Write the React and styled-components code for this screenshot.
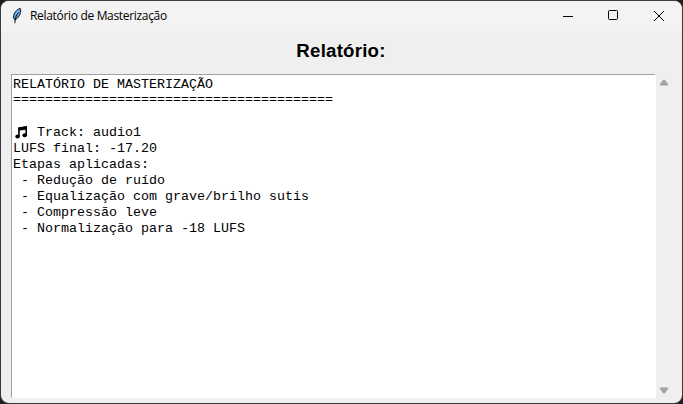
import React from "react";
import styled, { createGlobalStyle } from "styled-components";

const GlobalStyle = createGlobalStyle`
  * { box-sizing: border-box; }
  body { margin: 0; background: #1e1e20; overflow: hidden; }
`;

const Desktop = styled.div`
  width: 683px;
  height: 404px;
  background: #1e1e20;
`;

const Window = styled.main`
  display: flex;
  flex-direction: column;
  width: 683px;
  height: 404px;
  border: 1px solid #3b3a3d;
  border-radius: 9px;
  background: #efefef;
  overflow: hidden;
`;

const TitleBar = styled.header`
  display: flex;
  align-items: center;
  flex: none;
  height: 30px;
  padding-left: 9px;
  background: #f3f3f3;
`;

const AppIcon = styled.svg`
  flex: none;
  width: 14px;
  height: 18px;
  margin-right: 6px;
`;

const WindowTitle = styled.span`
  flex: 1;
  font: 12px/16px "Open Sans", "Noto Sans", sans-serif;
  letter-spacing: -0.32px;
  color: #000;
  white-space: nowrap;
`;

const ControlButton = styled.button`
  display: flex;
  align-items: center;
  justify-content: center;
  width: ${(p) => p.$width}px;
  height: 30px;
  padding: 0 0 1px;
  border: 0;
  background: transparent;

  svg { display: block; }
`;

const Heading = styled.h1`
  flex: none;
  height: 43px;
  margin: 0;
  padding-top: 9px;
  padding-right: 1px;
  font: bold 18.67px/22px "Liberation Sans", Arial, sans-serif;
  letter-spacing: 0.22px;
  color: #000;
  text-align: center;
`;

const Content = styled.section`
  display: flex;
  height: 324px;
  margin-left: 10px;
`;

const Report = styled.pre`
  width: 645px;
  height: 324px;
  margin: 0;
  padding: 2px 0 0 1px;
  border: 1px solid #fff;
  border-top-color: #a0a0a0;
  border-left-color: #a0a0a0;
  border-right-width: 2px;
  background: #fff;
  color: #000;
  font: 13.333px/16px "Liberation Mono", "Courier New", monospace;
`;

const Line = styled.div`
  display: flex;
  height: 16px;
  white-space: pre;
  line-height: ${(p) => (p.$rule ? 14 : 16)}px;
`;

const NoteIcon = styled.svg`
  width: 16px;
  height: 16px;
`;

const Scrollbar = styled.aside`
  display: flex;
  flex-direction: column;
  justify-content: space-between;
  align-items: center;
  width: 16px;
  padding: 5px 0 4px;
`;

const Arrow = styled.svg`
  display: block;
  width: 10px;
  height: 7px;
  fill: #a3a3a3;
`;

const lines = [
  "Etapas aplicadas:",
  " - Redução de ruído",
  " - Equalização com grave/brilho sutis",
  " - Compressão leve",
  " - Normalização para -18 LUFS",
];

export default function App() {
  return (
    <Desktop>
      <GlobalStyle />
      <Window>
        <TitleBar>
          <AppIcon viewBox="0 0 14 18">
            <path d="M10.2 1.4C6.4 2.3 3.6 6.2 3.4 10.2L4.6 12.9C8.4 11.8 11.3 6.5 10.6 1.8Z" fill="#5b9be0" stroke="#151c28" strokeWidth="1" />
            <path d="M8.2 5.2C6.3 8.2 5.1 11.2 4.9 16.2" fill="none" stroke="#10151d" strokeWidth="1" />
            <path d="M8.7 3.4L5.4 7.8" stroke="#a4cdf4" strokeWidth=".9" />
          </AppIcon>
          <WindowTitle>Relatório de Masterização</WindowTitle>
          <ControlButton $width={46} aria-label="Minimizar">
            <svg width="12" height="12" viewBox="0 0 12 12" shapeRendering="crispEdges"><path d="M1 6H11" stroke="#000" /></svg>
          </ControlButton>
          <ControlButton $width={45} aria-label="Maximizar">
            <svg width="11" height="11" viewBox="0 0 11 11"><rect x=".5" y=".5" width="9" height="9" rx="1" fill="none" stroke="#000" /></svg>
          </ControlButton>
          <ControlButton $width={46} aria-label="Fechar">
            <svg width="12" height="12" viewBox="0 0 12 12"><path d="M1 1L11 11M11 1L1 11" stroke="#000" strokeWidth="1" /></svg>
          </ControlButton>
        </TitleBar>
        <Heading>Relatório:</Heading>
        <Content>
          <Report>
            <Line>RELATÓRIO DE MASTERIZAÇÃO</Line>
            <Line $rule>{"=".repeat(40)}</Line>
            <Line />
            <Line>
              <NoteIcon viewBox="0 0 16 16" aria-label="♫">
                <path d="M6 11.5V3.2L13.2 2V10" fill="none" stroke="#000" strokeWidth="1.6" />
                <path d="M5.2 2.6L14 1.2V4.4L5.2 5.8Z" />
                <ellipse cx="4.6" cy="11.6" rx="2.3" ry="2" />
                <ellipse cx="11.7" cy="10.3" rx="2.3" ry="2" />
              </NoteIcon>
              {" Track: audio1"}
            </Line>
            <Line>LUFS final: -17.20</Line>
            {lines.map((line) => <Line key={line}>{line}</Line>)}
          </Report>
          <Scrollbar>
            <Arrow viewBox="0 0 10 7"><path d="M4 1Q5 0 6 1L9 5Q9.5 6.5 8.5 6.5H1.5Q.5 6.5 1 5Z" /></Arrow>
            <Arrow viewBox="0 0 10 7"><path d="M4 6Q5 7 6 6L9 2Q9.5 .5 8.5 .5H1.5Q.5 .5 1 2Z" /></Arrow>
          </Scrollbar>
        </Content>
      </Window>
    </Desktop>
  );
}
